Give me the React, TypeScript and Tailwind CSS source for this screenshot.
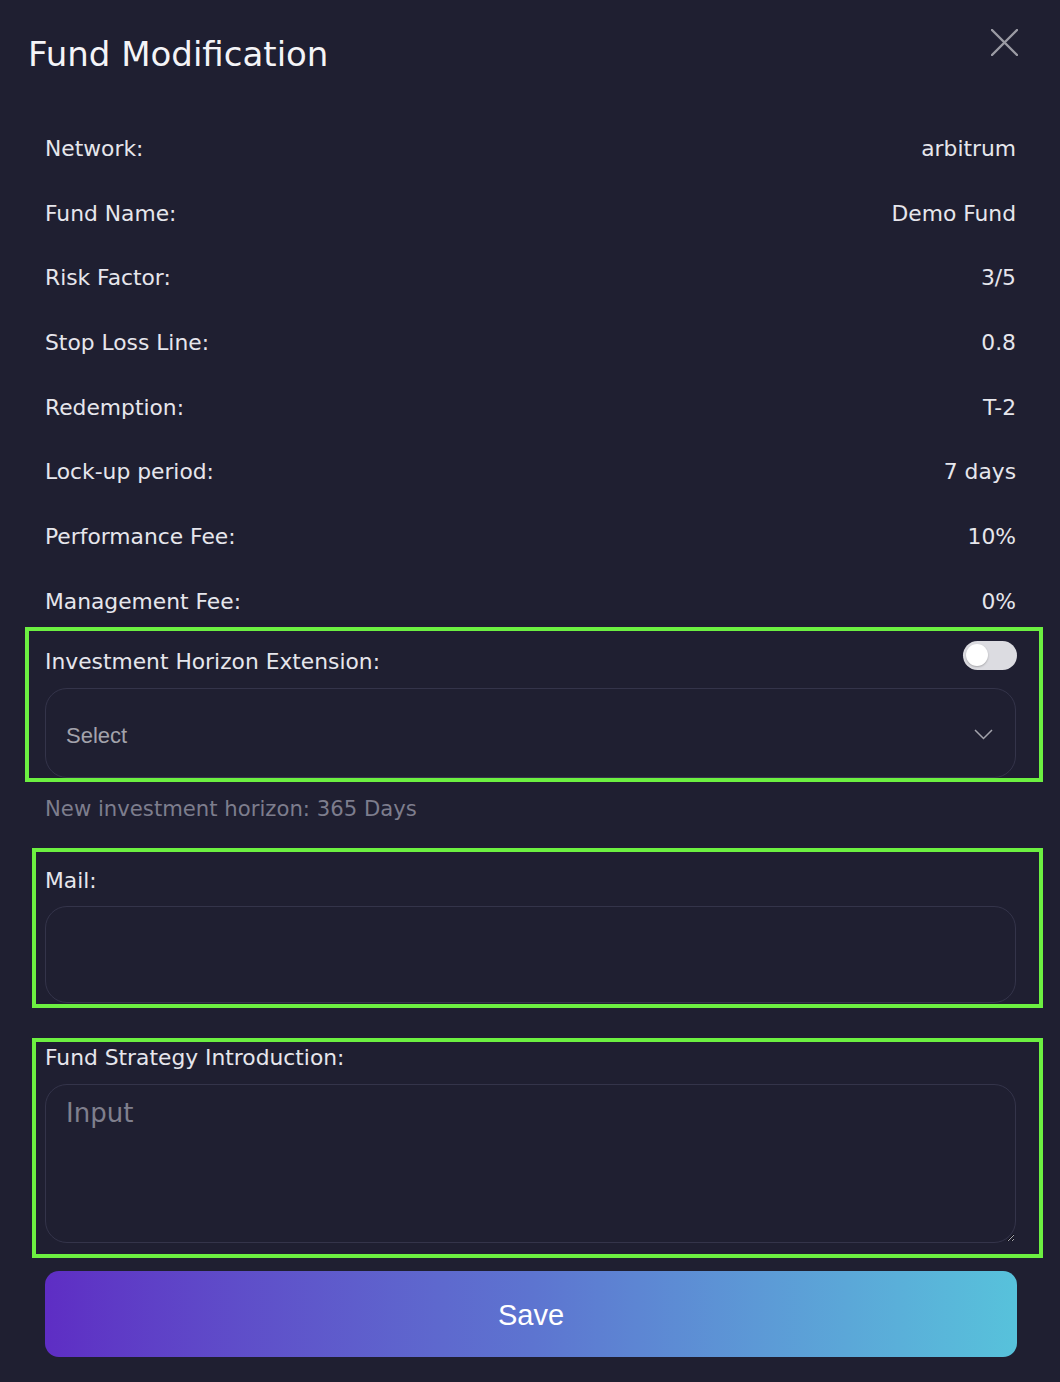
import React from "react";

const rows: [string, string][] = [
  ["Network:", "arbitrum"],
  ["Fund Name:", "Demo Fund"],
  ["Risk Factor:", "3/5"],
  ["Stop Loss Line:", "0.8"],
  ["Redemption:", "T-2"],
  ["Lock-up period:", "7 days"],
  ["Performance Fee:", "10%"],
  ["Management Fee:", "0%"],
];

export default function App() {
  return (
    <div
      className="w-[1060px] h-[1382px] bg-[#1f1f31] text-[#e6e6ec] overflow-hidden"
      style={{ fontFamily: '"DejaVu Sans", "Noto Sans", sans-serif' }}
    >
      {/* header */}
      <div className="flex items-start justify-between pl-[28px] pr-[42px]">
        <h1 className="mt-[34px] text-[34px] leading-[40px] font-normal text-[#f4f4f7]">
          Fund Modification
        </h1>
        <button className="mt-[29px] w-[27px] h-[27px]" aria-label="close">
          <svg width="27" height="27" viewBox="0 0 27 27" fill="none">
            <path d="M1 1L26 26M26 1L1 26" stroke="#9b9ba4" strokeWidth="2.4" strokeLinecap="round" />
          </svg>
        </button>
      </div>

      <div className="pl-[45px] pr-[44px]">
        {/* info rows */}
        <div className="mt-[58px] flex flex-col gap-[32.7px]">
          {rows.map(([k, v]) => (
            <div key={k} className="h-[32px] pt-[2px] flex items-center justify-between text-[21.8px] leading-[32px]">
              <span>{k}</span>
              <span>{v}</span>
            </div>
          ))}
        </div>

        {/* Investment horizon box */}
        <div className="mt-[10px] -ml-[20px] -mr-[27px] h-[155px] border-4 border-[#6cf041] pl-[16px] pr-[22px]">
          <div className="flex items-start justify-between">
            <span className="mt-[15px] text-[21.8px] leading-[32px]">Investment Horizon Extension:</span>
            <div className="mt-[10px] w-[54px] h-[29px] rounded-full bg-[#dcdce1] p-[3px] flex items-center">
              <div className="w-[22px] h-[22px] rounded-full bg-white shadow-[0_1px_2px_rgba(0,0,0,0.25)]" />
            </div>
          </div>
          <div className="mt-[10px] mr-[1px] h-[90px] rounded-[22px] border border-[#34344a] flex items-center justify-between pl-[20px] pr-[22px]">
            <span
              className="mt-[6px] text-[22px] text-[#a3a3ac]"
              style={{ fontFamily: '"Liberation Sans", Arial, sans-serif' }}
            >
              Select
            </span>
            <svg className="mt-[4px]" width="19" height="11" viewBox="0 0 19 11" fill="none">
              <path d="M1 1L9.5 9.5L18 1" stroke="#a3a3ac" strokeWidth="1.5" />
            </svg>
          </div>
        </div>

        <p className="mt-[11px] text-[21.2px] leading-[32px] text-[#7d7d8d]">
          New investment horizon: 365 Days
        </p>

        {/* Mail box */}
        <div className="mt-[23px] -ml-[13px] -mr-[27px] h-[160px] border-4 border-[#6cf041] pl-[9px] pr-[23px] pt-[13px]">
          <div className="text-[21.8px] leading-[32px]">Mail:</div>
          <input
            className="mt-[9px] w-full h-[97px] rounded-[22px] border border-[#34344a] bg-transparent outline-none px-[20px] text-[20px]"
          />
        </div>

        {/* Strategy box */}
        <div className="mt-[30px] -ml-[13px] -mr-[27px] h-[220px] border-4 border-[#6cf041] pl-[9px] pr-[23px] pt-[2px]">
          <div className="text-[21.8px] leading-[28px]">Fund Strategy Introduction:</div>
          <textarea
            placeholder="Input"
            className="mt-[12px] block w-full h-[159px] rounded-[22px] border border-[#34344a] bg-transparent outline-none px-[20px] pt-[13px] text-[26px] leading-[30px] placeholder:text-[#7f7f8d]"
          />
        </div>

        {/* Save */}
        <button
          className="mt-[13px] w-[972px] h-[86px] pt-[4px] rounded-[14px] bg-gradient-to-r from-[#5e2dc4] via-[#5d74d0] to-[#57c2db] text-white text-[29px]"
          style={{ fontFamily: '"Liberation Sans", Arial, sans-serif' }}
        >
          Save
        </button>
      </div>
    </div>
  );
}
